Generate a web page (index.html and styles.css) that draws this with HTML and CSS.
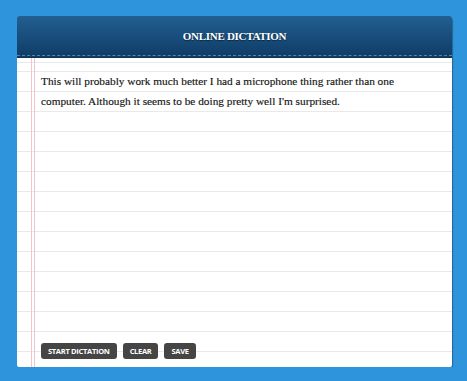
FILE: index.html
```html
<!doctype html>
<html lang="en">
  <head>
    <meta charset="UTF-8" />
    <meta name="viewport" content="width=device-width, initial-scale=1.0" />
    <title>Online Dictation</title>
    <link rel="stylesheet" href="styles.css">
  </head>

  <body>
    <div class="notepad">
      <div class="header">
        <h1>Online Dictation</h1>
      </div>

      <div class="paper">
        <p class="transcript">This will probably work much better I had a microphone thing rather than one computer. Although it seems to be doing pretty well I'm surprised.</p>

        <div class="actions">
          <button type="button" class="btn">Start Dictation</button>
          <button type="button" class="btn">Clear</button>
          <button type="button" class="btn">Save</button>
        </div>
      </div>
    </div>
  </body>
</html>
```

FILE: styles.css
```css
* {
  margin: 0;
  padding: 0;
  box-sizing: border-box;
}

body {
  background-color: #2e95dd;
  padding: 16px 15px 0 17px;
  font-family: 'Liberation Serif', serif;
}

.notepad {
  width: 435px;
  border-radius: 3px 3px 2px 2px;
  box-shadow: 1px 2px 1px rgba(20, 40, 60, 0.45);
}

.header {
  height: 41px;
  border-radius: 3px 3px 0 0;
  background: linear-gradient(to bottom, #225f91, #0f3c66);
  box-shadow: 0 1px 0 #0b3457;
  padding: 0 0 1px;
  display: flex;
}

.header h1 {
  flex: 1;
  display: flex;
  align-items: center;
  justify-content: center;
  border-bottom: 1px dashed rgba(160, 190, 215, 0.55);
  color: #fff;
  font-size: 11px;
  font-weight: 700;
  letter-spacing: -0.3px;
  text-transform: uppercase;
  text-shadow: 0 1px 1px rgba(0, 0, 0, 0.5);
  padding-top: 1px;
}

.paper {
  margin-top: 1px;
  height: 309px;
  display: flex;
  flex-direction: column;
  padding: 13px 30px 8px 24px;
  border-radius: 0 0 2px 2px;
  background-color: #fff;
  background-image:
    linear-gradient(to right, transparent 14px, #f2c4cc 14px, #f2c4cc 15px, transparent 15px, transparent 17px, #f2c4cc 17px, #f2c4cc 18px, transparent 18px),
    repeating-linear-gradient(to bottom, #e9e9e9 0, #e9e9e9 1px, transparent 1px, transparent 20px);
  background-position: 0 0, 0 13px;
}

.transcript {
  flex: 1;
  color: #151515;
  font-size: 11.3px;
  line-height: 20px;
  -webkit-text-stroke: 0.15px #151515;
}

.actions {
  display: flex;
  gap: 6px;
}

.btn {
  height: 16px;
  padding: 0 7px;
  border: none;
  border-radius: 3px;
  background-color: #454545;
  color: #fff;
  font-family: 'Open Sans', sans-serif;
  font-size: 7.5px;
  font-weight: 700;
  letter-spacing: -0.3px;
  text-transform: uppercase;
  cursor: pointer;
}
```
